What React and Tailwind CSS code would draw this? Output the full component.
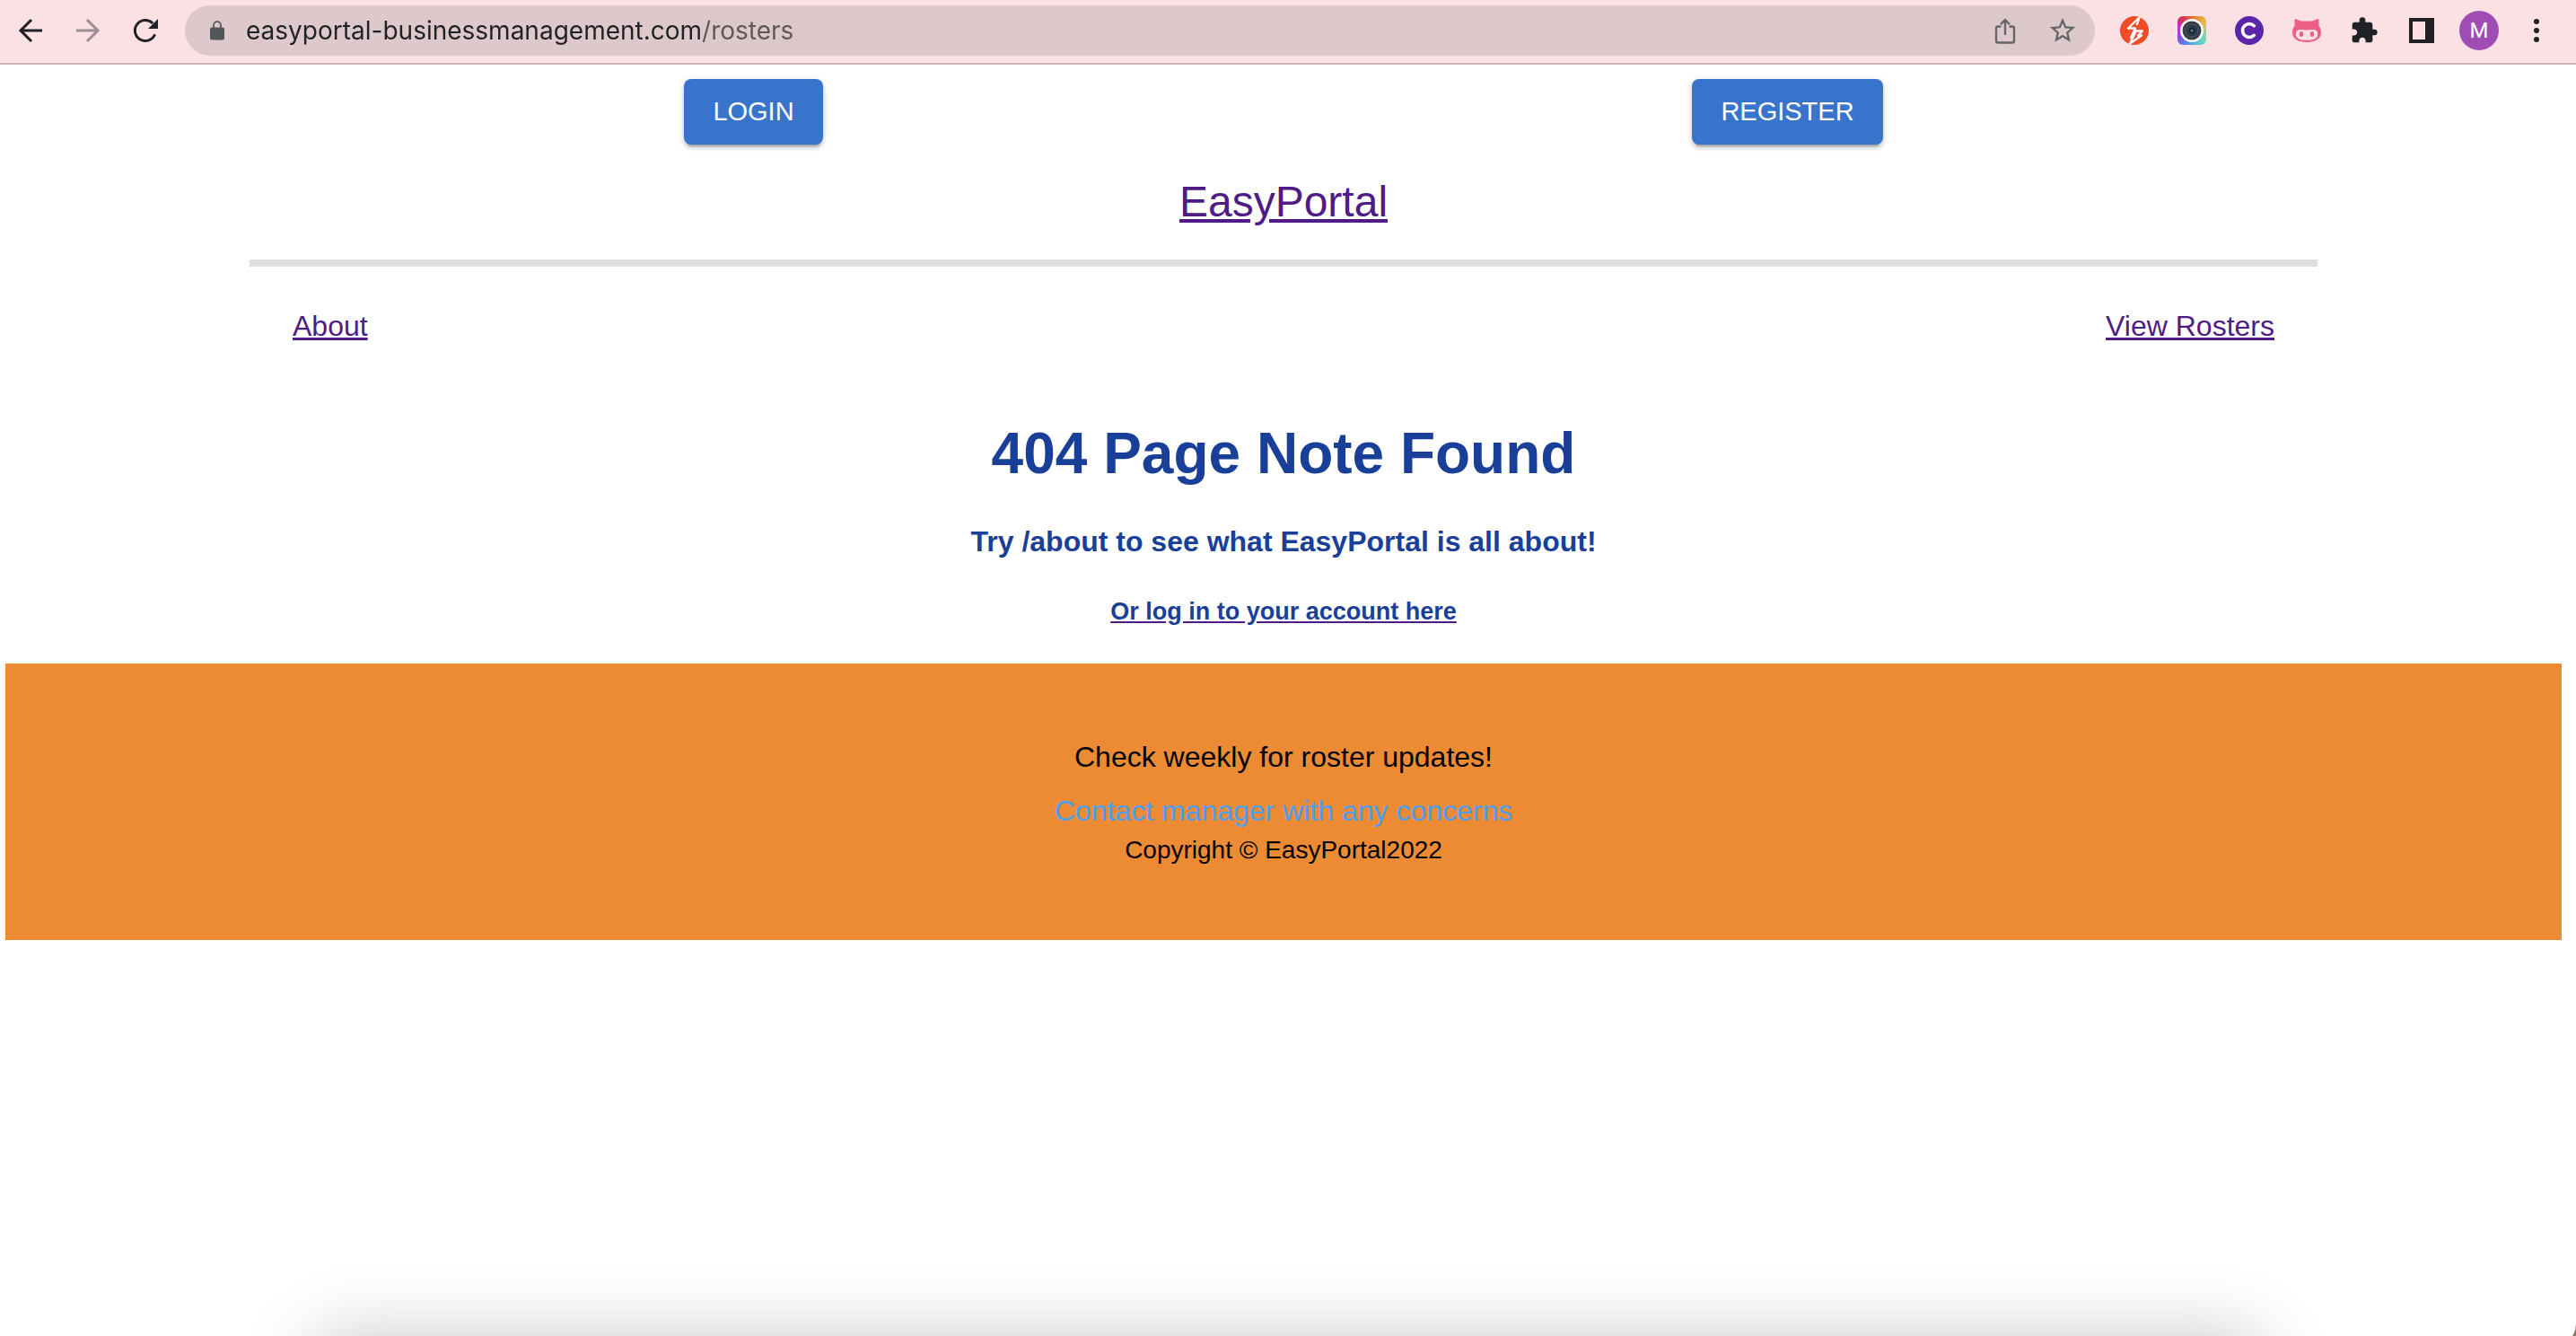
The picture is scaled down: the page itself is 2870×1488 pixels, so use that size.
import React from "react";

const iconCell = "flex h-14 w-16 shrink-0 items-center justify-center";

function IconButton({ label, children, className = "text-[#202124]" }) {
  return (
    <button type="button" aria-label={label} className={`${iconCell} ${className}`}>
      {children}
    </button>
  );
}

function BackIcon() {
  return (
    <svg className="size-8" viewBox="0 0 32 32" fill="none" stroke="currentColor" strokeWidth="3">
      <path d="M29 16H5M17 4 5 16l12 12" />
    </svg>
  );
}

function ForwardIcon() {
  return (
    <svg className="size-8" viewBox="0 0 32 32" fill="none" stroke="currentColor" strokeWidth="3">
      <path d="M3 16h24M15 4l12 12-12 12" />
    </svg>
  );
}

function ReloadIcon() {
  return (
    <svg className="size-8" viewBox="0 0 32 32">
      <path
        d="M26.6 20.2A11.5 11.5 0 1 1 24.2 8"
        fill="none"
        stroke="currentColor"
        strokeWidth="3"
      />
      <path d="M30 3v11H19z" fill="currentColor" />
    </svg>
  );
}

function LockIcon() {
  return (
    <svg className="h-[22px] w-4 shrink-0" viewBox="0 0 16 22">
      <path d="M4 9V5.2a4 4 0 0 1 8 0V9" fill="none" stroke="#54565a" strokeWidth="1.8" />
      <rect y="7.5" width="16" height="14" rx="2" fill="#54565a" />
    </svg>
  );
}

function ShareIcon() {
  return (
    <svg className="size-8" viewBox="0 0 32 32" fill="none" stroke="currentColor" strokeWidth="2.4">
      <path d="M11.5 11.500H8a2 2 0 0 0-2 2V27.500a2 2 0 0 0 2 2h16a2 2 0 0 0 2-2V13.500a2 2 0 0 0-2-2h-3.500M16 21V4.500M11 9.200l5-5 5 5" />
    </svg>
  );
}

function StarIcon() {
  return (
    <svg className="size-[34px]" viewBox="0 0 24 24" fill="currentColor">
      <path d="M22 9.24l-7.19-.62L12 2 9.19 8.63 2 9.24l5.46 4.73L5.82 21 12 17.27 18.18 21l-1.63-7.03L22 9.24zM12 15.4l-3.76 2.27 1-4.28-3.32-2.88 4.38-.38L12 6.1l1.71 4.04 4.38.38-3.32 2.88 1 4.28L12 15.4z" />
    </svg>
  );
}

function BoltExtension() {
  return (
    <svg className="size-8" viewBox="0 0 32 32">
      <circle cx="16" cy="16" r="16" fill="#f04c25" />
      <path
        d="M21.500 1.500 9 13.500h8L12 24M21.500 1.500 19 9M17.500 16.500h7.500l-5 5h4L11 30.500l6-12"
        fill="none"
        stroke="#fff"
        strokeWidth="2.3"
        strokeLinejoin="round"
        strokeLinecap="round"
      />
    </svg>
  );
}

function CameraExtension() {
  return (
    <span className="flex size-8 items-center justify-center rounded-md bg-[conic-gradient(#e8703c,#e8a33c_10%,#e8c04a_18%,#7fd8b0_30%,#62d8c8_38%,#4f8ff5_55%,#8a4be8_68%,#c22fd0_78%,#d8344f_90%,#e8703c)]">
      <svg className="size-[26px]" viewBox="0 0 26 26">
        <circle cx="13" cy="13" r="13" fill="#fff" />
        <circle cx="13" cy="13" r="10.5" fill="#3a3f45" />
        <circle cx="13" cy="13" r="7" fill="#2b3a47" stroke="#4d5a64" />
        <circle cx="13" cy="13" r="3.5" fill="#1c2a38" />
        <circle cx="13" cy="13" r="1.5" fill="#5d8299" />
      </svg>
    </span>
  );
}

function LetterCExtension() {
  return (
    <svg className="size-8" viewBox="0 0 32 32">
      <circle cx="16" cy="16" r="16" fill="#5b25ab" />
      <path
        d="M21.3 10.7a7.5 7.5 0 1 0 0 10.6"
        fill="none"
        stroke="#fff"
        strokeWidth="3.6"
        strokeLinecap="round"
      />
    </svg>
  );
}

function CatExtension() {
  return (
    <svg className="size-8" viewBox="0 0 32 32">
      <path
        d="M2.5 4.400c0-.9.7-1.300 1.500-1.100L10 5.500h12l6-2.200c.8-.2 1.500.2 1.500 1.100v6.500c1.700 2 2.500 4.100 2.500 6.900C32 25.500 25.500 29 16 29S0 25.500 0 17.800c0-2.800.8-4.900 2.500-6.900z"
        fill="#ee5f88"
      />
      <path
        d="M9 15c2.500 0 4.500.4 7 .4s4.500-.4 7-.4c3.300 0 5.200 1.800 5.200 5 0 5-4.200 6.800-12.200 6.800S3.800 25 3.800 20c0-3.200 1.900-5 5.200-5z"
        fill="#fbe0e4"
      />
      <ellipse cx="10" cy="20" rx="2.100" ry="3" fill="#ee5f88" />
      <ellipse cx="22" cy="20" rx="2.100" ry="3" fill="#ee5f88" />
    </svg>
  );
}

function PuzzleIcon() {
  return (
    <svg className="size-8" viewBox="0 0 24 24" fill="currentColor">
      <path d="M20.5 11H19V7c0-1.100-.9-2-2-2h-4V3.500a2.500 2.500 0 0 0-5 0V5H4c-1.100 0-1.990.9-1.990 2v3.800H3.500c1.490 0 2.700 1.210 2.700 2.700s-1.210 2.700-2.700 2.700H2V20c0 1.100.9 2 2 2h3.800v-1.500c0-1.490 1.210-2.700 2.700-2.700 1.490 0 2.700 1.210 2.700 2.700V22H17c1.100 0 2-.9 2-2v-4h1.500a2.500 2.500 0 0 0 0-5z" />
    </svg>
  );
}

function SidePanelIcon() {
  return (
    <svg className="size-7" viewBox="0 0 28 28">
      <path d="M0 0h28v28H0zM4 4v20h14V4z" fill="currentColor" fillRule="evenodd" />
    </svg>
  );
}

function MenuDotsIcon() {
  return (
    <svg className="size-8" viewBox="0 0 32 32" fill="currentColor">
      <circle cx="16" cy="6" r="3" />
      <circle cx="16" cy="16" r="3" />
      <circle cx="16" cy="26" r="3" />
    </svg>
  );
}

function BrowserToolbar() {
  return (
    <header className="flex items-center border-b-2 border-[#cbb5b9] bg-[#fbe0e4] pt-1.5 pr-3 pb-2 pl-0.5">
      <IconButton label="Back">
        <BackIcon />
      </IconButton>
      <IconButton label="Forward" className="text-[#9d8f93]">
        <ForwardIcon />
      </IconButton>
      <IconButton label="Reload">
        <ReloadIcon />
      </IconButton>
      <div className="mx-3 flex h-14 min-w-0 flex-1 items-center rounded-full bg-[#ddc8cb] pr-1 pl-7">
        <LockIcon />
        <input
          type="text"
          aria-label="Address"
          defaultValue="easyportal-businessmanagement.com/rosters"
          className="ml-6 min-w-0 flex-1 bg-[linear-gradient(to_right,#202124_506px,#5f5658_506px)] bg-clip-text font-['Inter',sans-serif] text-[28px] leading-10 text-transparent outline-none"
        />
        <IconButton label="Share" className="text-[#646667]">
          <ShareIcon />
        </IconButton>
        <IconButton label="Bookmark" className="text-[#646667]">
          <StarIcon />
        </IconButton>
      </div>
      <IconButton label="Bolt extension">
        <BoltExtension />
      </IconButton>
      <IconButton label="Camera extension">
        <CameraExtension />
      </IconButton>
      <IconButton label="C extension">
        <LetterCExtension />
      </IconButton>
      <IconButton label="Cat extension">
        <CatExtension />
      </IconButton>
      <IconButton label="Extensions">
        <PuzzleIcon />
      </IconButton>
      <IconButton label="Side panel">
        <SidePanelIcon />
      </IconButton>
      <IconButton label="Profile">
        <span className="flex size-11 items-center justify-center rounded-full bg-[#9f4db5] font-['Roboto',sans-serif] text-2xl text-white">
          M
        </span>
      </IconButton>
      <IconButton label="Menu">
        <MenuDotsIcon />
      </IconButton>
    </header>
  );
}

function PrimaryButton({ children }) {
  return (
    <button
      type="button"
      className="rounded-lg bg-[#3874cb] px-8 py-3 text-[29px] leading-[49px] text-white shadow-[0_6px_2px_-4px_rgba(0,0,0,0.2),0_4px_4px_0_rgba(0,0,0,0.14),0_2px_10px_0_rgba(0,0,0,0.12)]"
    >
      {children}
    </button>
  );
}

export default function App() {
  return (
    <div className="relative flex min-h-screen flex-col overflow-hidden bg-white font-['Liberation_Sans',Arial,sans-serif] text-black">
      <BrowserToolbar />
      <div className="pt-4 pr-4 pl-1.5">
        <div className="mx-auto max-w-[2304px]">
          <div className="flex justify-around">
            <PrimaryButton>LOGIN</PrimaryButton>
            <PrimaryButton>REGISTER</PrimaryButton>
          </div>
          <div className="mt-8 text-center text-5xl leading-16">
            <a href="#home" className="text-[#4f1b87] underline">
              EasyPortal
            </a>
          </div>
          <hr className="mt-8 border-t-8 border-[#dfdfdf]" />
          <nav className="mt-[46px] flex justify-between px-12 text-[32px] leading-10 text-[#4f1b87]">
            <a href="#about" className="underline">
              About
            </a>
            <a href="#rosters" className="underline">
              View Rosters
            </a>
          </nav>
        </div>
        <main className="mt-[86px] text-center font-bold text-[#1a3f99]">
          <h1 className="text-[64px] leading-18">404 Page Note Found</h1>
          <h2 className="mt-[42px] text-[32px] leading-10">
            Try /about to see what EasyPortal is all about!
          </h2>
          <h3 className="mt-[42px] text-[27px] leading-8">
            <a href="#login" className="underline decoration-[#4f1b87]">
              Or log in to your account here
            </a>
          </h3>
        </main>
        <footer className="mt-[42px] bg-[#ec8b33] py-[84px] text-center">
          <p className="text-[32px] leading-10">Check weekly for roster updates!</p>
          <p className="mt-5 text-[32px] leading-10">
            <a href="#contact" className="text-[#4aa0f5]">
              Contact manager with any concerns
            </a>
          </p>
          <p className="mt-2 text-[28px] leading-8">Copyright © EasyPortal2022</p>
        </footer>
      </div>
      <div className="pointer-events-none absolute inset-x-[350px] top-full h-40 rounded-3xl shadow-[0_0_80px_0_rgba(0,0,0,0.22)]" />
      <svg className="pointer-events-none absolute right-0 bottom-0 h-4 w-1" viewBox="0 0 4 16">
        <path d="M4 2v14H0c2-3 3.5-7 4-14z" fill="#9a7466" />
      </svg>
    </div>
  );
}
